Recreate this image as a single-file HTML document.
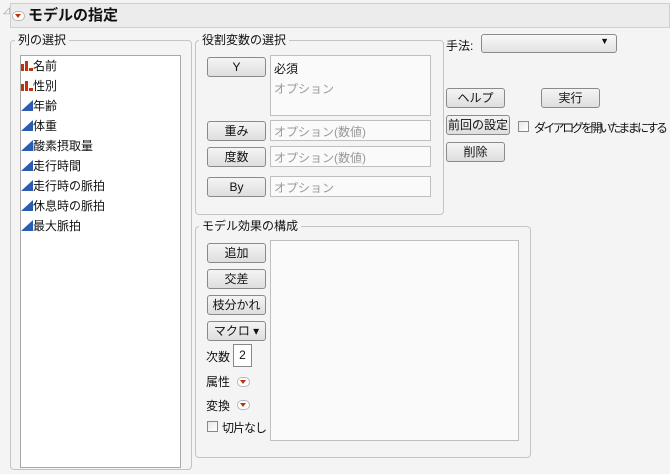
<!DOCTYPE html><html><head><meta charset="utf-8"><style>
body{margin:0;width:670px;height:474px;background:#f4f4f4;font-family:"Liberation Sans","Noto Sans CJK JP",sans-serif;font-size:12px;color:#111;position:relative;overflow:hidden}
.a{position:absolute;white-space:nowrap}
.g{position:absolute;border:1px solid #c4c4c4;border-radius:4px}
.lab{position:absolute;background:#f4f4f4;padding:0 3px;font-size:12px;line-height:14px}
.btn{position:absolute;border:1px solid #8a8a8a;border-radius:3px;background:linear-gradient(#f4f4f4,#dedede);text-align:center;font-size:12px;line-height:18px;box-sizing:border-box;height:20px;white-space:nowrap}
.box{position:absolute;background:#fafafa;border:1px solid #bfbfbf;box-sizing:border-box;white-space:nowrap}
.ph{color:#999}
.cb{position:absolute;width:11px;height:11px;border:1px solid #888;background:linear-gradient(135deg,#e8e8e8,#fff);box-sizing:border-box}
.rt{position:absolute;width:13px;height:10px;border:1px solid #b8b8b8;border-radius:5px;background:#fff;box-sizing:border-box}
.rt:after{content:"";position:absolute;left:2px;top:2px;border-left:3.5px solid transparent;border-right:3.5px solid transparent;border-top:4px solid #c0320a}
.list div{height:20px;line-height:20px;white-space:nowrap}
.list svg{vertical-align:-1px}
</style></head><body>
<div class="a" style="left:3px;top:5px;font-size:9px;color:#999">◿</div>
<div class="a" style="left:10px;top:3px;width:660px;height:25px;background:#ececec;border:1px solid #cfcfcf;box-sizing:border-box"></div>
<div class="rt" style="left:12px;top:11px"></div>
<div class="a" style="left:28px;top:7px;font-size:15px;font-weight:bold;line-height:18px">モデルの指定</div>

<div class="g" style="left:10px;top:40px;width:180px;height:428px"></div>
<div class="lab" style="left:15px;top:33px">列の選択</div>
<div class="box" style="left:20px;top:55px;width:161px;height:413px;background:#fff;border-color:#a8a8a8"></div>
<div class="a list" style="left:21px;top:56px;width:150px">
<div><svg width="12" height="10"><rect x="0" y="3" width="3" height="7" fill="#c0320a"/><rect x="4" y="0" width="3" height="10" fill="#c0320a"/><rect x="8" y="7" width="4" height="3" fill="#c0320a"/></svg>名前</div>
<div><svg width="12" height="10"><rect x="0" y="3" width="3" height="7" fill="#c0320a"/><rect x="4" y="0" width="3" height="10" fill="#c0320a"/><rect x="8" y="7" width="4" height="3" fill="#c0320a"/></svg>性別</div>
<div><svg width="12" height="11"><polygon points="0,11 12,0 12,11" fill="#2a5db0"/></svg>年齢</div>
<div><svg width="12" height="11"><polygon points="0,11 12,0 12,11" fill="#2a5db0"/></svg>体重</div>
<div><svg width="12" height="11"><polygon points="0,11 12,0 12,11" fill="#2a5db0"/></svg>酸素摂取量</div>
<div><svg width="12" height="11"><polygon points="0,11 12,0 12,11" fill="#2a5db0"/></svg>走行時間</div>
<div><svg width="12" height="11"><polygon points="0,11 12,0 12,11" fill="#2a5db0"/></svg>走行時の脈拍</div>
<div><svg width="12" height="11"><polygon points="0,11 12,0 12,11" fill="#2a5db0"/></svg>休息時の脈拍</div>
<div><svg width="12" height="11"><polygon points="0,11 12,0 12,11" fill="#2a5db0"/></svg>最大脈拍</div>
</div>

<div class="g" style="left:195px;top:40px;width:247px;height:173px"></div>
<div class="lab" style="left:199px;top:33px">役割変数の選択</div>
<div class="btn" style="left:207px;top:57px;width:59px">Y</div>
<div class="box" style="left:270px;top:55px;width:161px;height:61px"></div>
<div class="a" style="left:274px;top:60px">必須</div>
<div class="a ph" style="left:274px;top:80px">オプション</div>
<div class="btn" style="left:207px;top:121px;width:59px">重み</div>
<div class="box ph" style="left:270px;top:120px;width:161px;height:21px;padding:2px 3px">オプション(数値)</div>
<div class="btn" style="left:207px;top:147px;width:59px">度数</div>
<div class="box ph" style="left:270px;top:146px;width:161px;height:21px;padding:2px 3px">オプション(数値)</div>
<div class="btn" style="left:207px;top:177px;width:59px">By</div>
<div class="box ph" style="left:270px;top:176px;width:161px;height:21px;padding:2px 3px">オプション</div>

<div class="g" style="left:195px;top:226px;width:334px;height:230px"></div>
<div class="lab" style="left:199px;top:219px">モデル効果の構成</div>
<div class="btn" style="left:207px;top:243px;width:59px">追加</div>
<div class="btn" style="left:207px;top:269px;width:59px">交差</div>
<div class="btn" style="left:207px;top:295px;width:59px">枝分かれ</div>
<div class="btn" style="left:207px;top:321px;width:59px">マクロ ▾</div>
<div class="a" style="left:206px;top:348px">次数</div>
<div class="a" style="left:233px;top:344px;width:19px;height:23px;border:1px solid #888;background:#fff;box-sizing:border-box;text-align:center;line-height:21px">2</div>
<div class="a" style="left:206px;top:373px">属性</div><div class="rt" style="left:237px;top:377px"></div>
<div class="a" style="left:206px;top:397px">変換</div><div class="rt" style="left:237px;top:400px"></div>
<div class="cb" style="left:207px;top:421px"></div>
<div class="a" style="left:222px;top:419px;letter-spacing:-1px">切片なし</div>
<div class="box" style="left:270px;top:240px;width:249px;height:201px"></div>

<div class="a" style="left:446px;top:37px">手法:</div>
<div class="a" style="left:481px;top:34px;width:136px;height:19px;border:1px solid #8a8a8a;border-radius:3px;background:linear-gradient(#f8f8f8,#e2e2e2);box-sizing:border-box"><span style="position:absolute;right:7px;top:1px;font-size:9px">▼</span></div>
<div class="btn" style="left:446px;top:88px;width:59px">ヘルプ</div>
<div class="btn" style="left:541px;top:88px;width:59px">実行</div>
<div class="btn" style="left:446px;top:115px;width:64px;padding:0">前回の設定</div>
<div class="cb" style="left:518px;top:121px"></div>
<div class="a" style="left:534px;top:119px;letter-spacing:-2.6px">ダイアログを開いたままにする</div>
<div class="btn" style="left:446px;top:142px;width:59px">削除</div>
</body></html>
